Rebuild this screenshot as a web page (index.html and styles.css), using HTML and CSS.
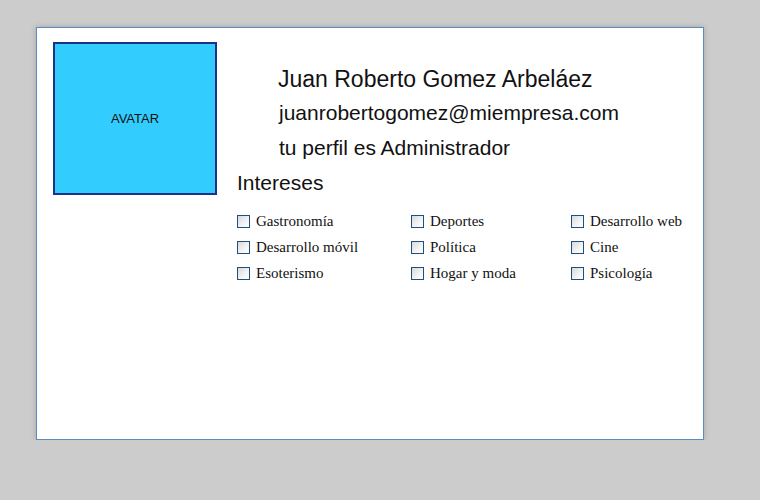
FILE: index.html
```html
<!DOCTYPE html>
<html lang="es">
<head>
<meta charset="utf-8">
<link rel="stylesheet" href="styles.css">
</head>
<body>
<div class="card">
  <div class="avatar">AVATAR</div>
  <div class="info">
    <div class="who">
      <div class="name">Juan Roberto Gomez Arbeláez</div>
      <div class="line">juanrobertogomez@miempresa.com</div>
      <div class="line">tu perfil es Administrador</div>
    </div>
    <div class="heading">Intereses</div>
    <div class="grid">
      <label class="opt"><span class="box"></span>Gastronomía</label>
      <label class="opt"><span class="box"></span>Deportes</label>
      <label class="opt"><span class="box"></span>Desarrollo web</label>
      <label class="opt"><span class="box"></span>Desarrollo móvil</label>
      <label class="opt"><span class="box"></span>Política</label>
      <label class="opt"><span class="box"></span>Cine</label>
      <label class="opt"><span class="box"></span>Esoterismo</label>
      <label class="opt"><span class="box"></span>Hogar y moda</label>
      <label class="opt"><span class="box"></span>Psicología</label>
    </div>
  </div>
</div>
</body>
</html>
```

FILE: styles.css
```css
html, body {
  margin: 0;
  background: #cccccc;
}
body {
  padding: 27px 0 0 36px;
  font-family: "Liberation Sans", Arial, sans-serif;
  color: #111;
}
.card {
  box-sizing: border-box;
  width: 668px;
  height: 413px;
  background: #fff;
  border: 1px solid #5b8cc0;
  box-shadow: 0 0 6px rgba(0, 0, 0, 0.2);
  padding: 14px 16px;
  display: flex;
  align-items: flex-start;
}
.avatar {
  box-sizing: border-box;
  width: 164px;
  height: 153px;
  flex: none;
  background: #33ccff;
  border: 2px solid #1a3288;
  display: flex;
  align-items: center;
  justify-content: center;
  font-size: 13px;
  color: #111;
}
.info {
  margin-left: 20px;
  padding-top: 22px;
}
.who {
  padding-left: 41px;
}
.name {
  font-size: 23px;
  line-height: 31px;
}
.line {
  font-size: 21px;
  line-height: 35px;
  margin-left: 1px;
}
.heading {
  font-size: 21px;
  line-height: 35px;
}
.grid {
  margin-top: 8px;
  display: grid;
  grid-template-columns: 174px 160px auto;
  grid-auto-rows: 26px;
  font-family: "Liberation Serif", "Times New Roman", serif;
  font-size: 15px;
  color: #111;
}
.opt {
  display: flex;
  align-items: center;
  white-space: nowrap;
}
.box {
  box-sizing: border-box;
  width: 13px;
  height: 13px;
  margin-right: 6px;
  border: 1px solid #1f4f7e;
  background: linear-gradient(135deg, #d8d8d8 0%, #f4f4f4 60%, #ffffff 100%);
  flex: none;
}
```
